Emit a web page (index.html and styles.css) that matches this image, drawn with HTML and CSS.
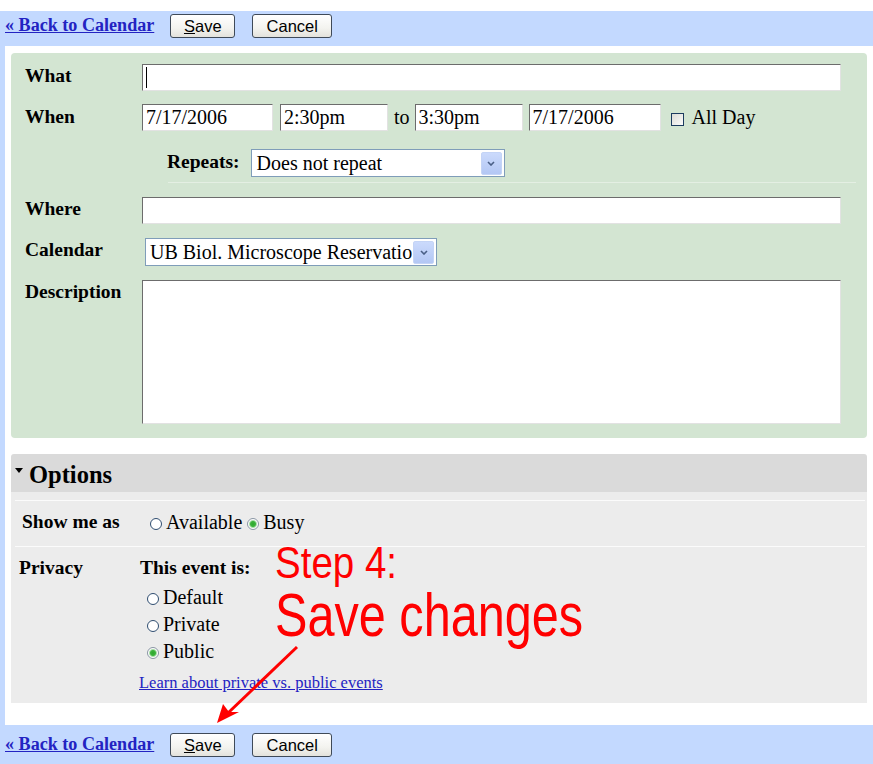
FILE: index.html
```html
<!DOCTYPE html>
<html lang="en">
<head>
  <meta charset="UTF-8">
  <title>Edit Event</title>
  <link rel="stylesheet" href="styles.css">
</head>
<body>
  <div class="page">
    <div class="actionbar">
      <a href="#" class="back">&laquo; Back to Calendar</a>
      <button class="btn btn-save"><u>S</u>ave</button>
      <button class="btn btn-cancel">Cancel</button>
    </div>

    <div class="content">
      <div class="details">
        <div class="row first">
          <div class="label">What</div>
          <div class="field caret">
            <input type="text" class="text wide" value="">
          </div>
        </div>

        <div class="row when">
          <div class="label">When</div>
          <input type="text" class="text date" value="7/17/2006">
          <input type="text" class="text time t1" value="2:30pm">
          <span class="word to">to</span>
          <input type="text" class="text time t2" value="3:30pm">
          <input type="text" class="text date d2" value="7/17/2006">
          <span class="checkbox"></span>
          <span class="word">All Day</span>
        </div>

        <div class="row repeats">
          <div class="label-inline">Repeats:</div>
          <div class="select select-repeats">
            <span class="select-text">Does not repeat</span>
            <span class="select-btn">
              <svg width="8" height="5" viewBox="0 0 8 5"><polyline points="1,1 4,4 7,1" fill="none" stroke="#4a5f86" stroke-width="1.6"/></svg>
            </span>
          </div>
        </div>
        <div class="sep"></div>

        <div class="row">
          <div class="label">Where</div>
          <input type="text" class="text wide" value="">
        </div>

        <div class="row">
          <div class="label">Calendar</div>
          <div class="select select-cal">
            <span class="select-text">UB Biol. Microscope Reservatio</span>
            <span class="select-btn">
              <svg width="8" height="5" viewBox="0 0 8 5"><polyline points="1,1 4,4 7,1" fill="none" stroke="#4a5f86" stroke-width="1.6"/></svg>
            </span>
          </div>
        </div>

        <div class="row last">
          <div class="label">Description</div>
          <textarea class="text desc"></textarea>
        </div>
      </div>

      <div class="options">
        <div class="opt-head"><span class="tri"></span>Options</div>
        <div class="opt-body">
          <div class="opt-sep"></div>
          <div class="opt-row show">
            <div class="opt-label">Show me as</div>
            <div>
              <span class="radio"></span>Available
              <span class="radio on"></span>Busy
            </div>
          </div>
          <div class="opt-sep second"></div>
          <div class="opt-row privacy">
            <div class="opt-label">Privacy</div>
            <div class="privacy-col">
              <div class="sub-head">This event is:</div>
              <div class="choice"><span class="radio"></span>Default</div>
              <div class="choice"><span class="radio"></span>Private</div>
              <div class="choice"><span class="radio on"></span>Public</div>
              <a href="#" class="learn">Learn about private vs. public events</a>
            </div>
          </div>
        </div>
      </div>
    </div>

    <div class="actionbar bottom">
      <a href="#" class="back">&laquo; Back to Calendar</a>
      <button class="btn btn-save"><u>S</u>ave</button>
      <button class="btn btn-cancel">Cancel</button>
    </div>
  </div>

  <!-- tutorial annotation drawn over the page -->
  <div class="callout">
    <div class="step">Step 4:</div>
    <div class="step-big">Save changes</div>
  </div>
  <svg class="arrow" width="873" height="764" viewBox="0 0 873 764">
    <line x1="297" y1="647" x2="228" y2="713" stroke="#f00" stroke-width="3"/>
    <polygon points="217,723 223,704 229,712 239,712" fill="#f00"/>
  </svg>
</body>
</html>
```

FILE: styles.css
```css
html, body {
  margin: 0;
  background: #fff;
  font-family: "Liberation Serif", "Times New Roman", serif;
  color: #000;
}

.page {
  margin-top: 11px;
  background: #c3d9ff;
  padding-left: 5px;
}

.actionbar {
  height: 35px;
  box-sizing: border-box;
  padding-top: 3px;
  display: flex;
  align-items: flex-start;
}

.actionbar.bottom {
  height: 39px;
  padding-top: 8px;
}

.back {
  font-weight: bold;
  font-size: 18.1px;
  line-height: 22px;
  color: #2323c2;
}

.btn {
  height: 24px;
  box-sizing: border-box;
  padding: 0;
  font-family: "Liberation Sans", Arial, sans-serif;
  font-size: 16.5px;
  color: #000;
  border: 1px solid #3f4a58;
  border-radius: 3px;
  background: linear-gradient(#ffffff, #f3f3ef 60%, #e3e2dc);
}

.btn-save {
  width: 65px;
  margin-left: 16px;
}

.btn-cancel {
  width: 80px;
  margin-left: 17px;
}

.content {
  background: #fff;
  padding: 7px 6px 22px 6px;
}

/* green event details box */
.details {
  background: #d3e5d2;
  border-radius: 4px;
  padding: 11px 26px 14px 14px;
}

.row {
  display: flex;
  align-items: flex-start;
  margin-bottom: 14px;
}

.row.first {
  margin-bottom: 13px;
}

.row.when {
  margin-bottom: 18px;
  align-items: center;
}

.row.last {
  margin-bottom: 0;
}

.label {
  width: 117px;
  flex: none;
  font-weight: bold;
  font-size: 19.5px;
  line-height: 24px;
}

.when .label {
  align-self: flex-start;
  margin-top: 1px;
}

.field {
  flex: 1;
  display: flex;
}

.caret {
  position: relative;
}

.caret::after {
  content: "";
  position: absolute;
  left: 4px;
  top: 3px;
  width: 1px;
  height: 21px;
  background: #000;
}

.text {
  height: 27px;
  box-sizing: border-box;
  margin: 0;
  padding: 0 3px;
  font-family: "Liberation Serif", "Times New Roman", serif;
  font-size: 20px;
  color: #000;
  background: #fff;
  border: 1px solid;
  border-color: #6c6c6c #e2e2e2 #e2e2e2 #6c6c6c;
  outline: none;
}

.wide {
  flex: 1;
}

.date {
  width: 131px;
}

.time {
  width: 108px;
}

.t1 {
  margin-left: 7px;
}

.t2 {
  margin-left: 5px;
}

.d2 {
  width: 132px;
  margin-left: 6px;
}

.word {
  font-size: 20px;
  line-height: 27px;
}

.to {
  margin-left: 6px;
}

.checkbox {
  width: 13px;
  height: 13px;
  box-sizing: border-box;
  margin: 4px 8px 0 10px;
  border: 1px solid #1c3b5f;
  background: linear-gradient(135deg, #dcdcd6, #fbfbfb);
}

.repeats {
  margin-bottom: 0;
  padding-left: 142px;
}

.label-inline {
  font-weight: bold;
  font-size: 19.5px;
  line-height: 24px;
  margin-top: 1px;
  margin-right: 11px;
}

.select {
  height: 28px;
  box-sizing: border-box;
  display: flex;
  align-items: center;
  border: 1px solid #7f9db9;
  background: #fff;
  padding: 0 2px 0 5px;
  font-size: 20px;
}

.select-repeats {
  width: 254px;
}

.select-cal {
  width: 292px;
  margin-left: 3px;
  padding-left: 4px;
}

.select-text {
  flex: 1;
  min-width: 0;
  white-space: nowrap;
}

.select-btn {
  width: 21px;
  height: 23px;
  flex: none;
  box-sizing: border-box;
  display: flex;
  align-items: center;
  justify-content: center;
  border: 1px solid #c4d4f6;
  border-radius: 2px;
  background: linear-gradient(#cbdafc, #b3c7f4);
}

.sep {
  height: 1px;
  background: #e4efe3;
  margin: 5px -15px 14px 143px;
}

.desc {
  flex: 1;
  height: 144px;
  resize: none;
}

/* options box */
.options {
  margin-top: 16px;
}

.opt-head {
  height: 38px;
  box-sizing: border-box;
  background: #dadada;
  border-radius: 3px 3px 0 0;
  padding: 7px 0 0 4px;
  font-weight: bold;
  font-size: 24.5px;
  line-height: 28px;
  display: flex;
  align-items: flex-start;
}

.tri {
  width: 0;
  height: 0;
  margin: 7px 6px 0 0;
  border-left: 4.5px solid transparent;
  border-right: 4.5px solid transparent;
  border-top: 5px solid #000;
}

.opt-body {
  background: #ececec;
  padding: 8px 2px 10px 4px;
  font-size: 20px;
}

.opt-sep {
  height: 1px;
  background: #fbfbfb;
}

.opt-sep.second {
  margin-top: 12px;
}

.opt-row {
  display: flex;
  margin-top: 9px;
  line-height: 24px;
}

.opt-label {
  font-weight: bold;
  font-size: 19.5px;
}

.show {
  padding-left: 7px;
}

.show .opt-label {
  width: 128px;
}

.privacy {
  padding-left: 4px;
}

.privacy .opt-label {
  width: 121px;
}

.sub-head {
  font-weight: bold;
  font-size: 19.5px;
  margin-bottom: 4px;
}

.choice {
  line-height: 27px;
  padding-left: 7px;
}

.radio {
  display: inline-block;
  width: 12px;
  height: 12px;
  box-sizing: border-box;
  margin-right: 4px;
  vertical-align: -1px;
  border: 1px solid #2f4d70;
  border-radius: 50%;
  background: #fff;
}

.radio.on {
  border-color: #8a96a4;
  background: radial-gradient(circle, #2ea52e 0, #3cb43c 2.5px, #a9dca9 3.5px, #fff 4.5px);
}

.learn {
  display: inline-block;
  margin-top: 8px;
  margin-left: -1px;
  font-size: 16.5px;
  line-height: 20px;
  color: #2323c2;
}

/* red tutorial annotation */
.callout {
  position: absolute;
  left: 275px;
  top: 541px;
  color: #f00;
  font-family: "Liberation Sans", Arial, sans-serif;
  white-space: nowrap;
}

.step {
  font-size: 44px;
  line-height: 44px;
  transform: scaleX(0.875);
  transform-origin: left;
}

.step-big {
  font-size: 61px;
  line-height: 61px;
  transform: scaleX(0.797);
  transform-origin: left;
}

.arrow {
  position: absolute;
  left: 0;
  top: 0;
  pointer-events: none;
}
```
